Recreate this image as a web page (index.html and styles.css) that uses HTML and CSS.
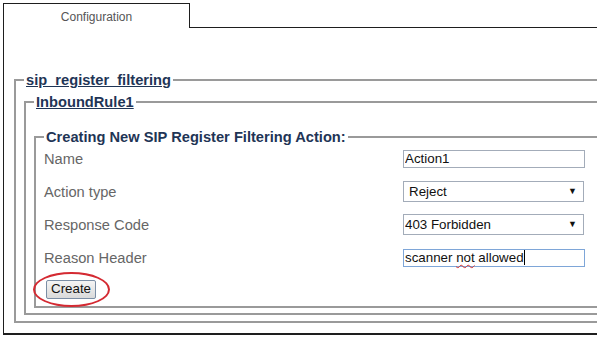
FILE: index.html
```html
<!DOCTYPE html>
<html lang="en">
<head>
    <meta charset="UTF-8">
    <meta name="viewport" content="width=device-width, initial-scale=1.0">
    <title>Configuration</title>
    <link rel="stylesheet" href="styles.css">
</head>
<body>
    <div class="page">
        <div class="tabs">
            <div class="tab">Configuration</div>
            <div class="tab-fill"></div>
        </div>
        <div class="panel">
            <fieldset class="group outer">
                <legend><a href="#">sip_register_filtering</a></legend>
                <fieldset class="group rule">
                    <legend><a href="#">InboundRule1</a></legend>
                    <fieldset class="group action">
                        <legend>Creating New SIP Register Filtering Action:</legend>
                        <div class="form">
                            <label class="label">Name</label>
                            <div class="field"><input class="input" type="text" value="Action1"></div>

                            <label class="label">Action type</label>
                            <div class="field">
                                <span class="select-wrap">
                                    <select class="select padded">
                                        <option>Reject</option>
                                    </select>
                                </span>
                            </div>

                            <label class="label">Response Code</label>
                            <div class="field">
                                <span class="select-wrap">
                                    <select class="select">
                                        <option>403 Forbidden</option>
                                    </select>
                                </span>
                            </div>

                            <label class="label">Reason Header</label>
                            <div class="field">
                                <div class="input focused">scanner <span class="typo">not</span> allowed<span class="caret"></span></div>
                            </div>
                        </div>
                        <div class="actions">
                            <span class="marked">
                                <button class="button">Create</button>
                            </span>
                        </div>
                    </fieldset>
                </fieldset>
            </fieldset>
        </div>
    </div>
</body>
</html>
```

FILE: styles.css
```css
body {
    margin: 0;
    font-family: "Liberation Sans", Arial, sans-serif;
    background: #fff;
    overflow: hidden;
}
.page {
    margin: 3px 0 0 3px;
    width: 700px;
}
.tabs {
    display: flex;
    height: 25px;
}
.tab {
    width: 187px;
    border: 1px solid #1e1e1e;
    border-bottom: none;
    font-size: 12px;
    color: #555;
    text-align: center;
    padding-top: 6px;
    box-sizing: border-box;
}
.tab-fill {
    flex: 1;
    border-bottom: 1px solid #1e1e1e;
}
.panel {
    border-left: 1px solid #1e1e1e;
    border-bottom: 2px solid #1e1e1e;
    padding: 44px 0 10px 10px;
}
.group {
    margin: 0;
    border: 2px solid #9a9a9a;
    border-right: none;
    padding: 6px 0 6px 8px;
    min-width: 0;
}
.group legend {
    padding: 0 2px;
    font-size: 14.67px;
    line-height: 16px;
    font-weight: bold;
    color: #1f3556;
}
.group legend a {
    color: #1f3556;
}
.rule {
    padding-bottom: 5px;
}
.action {
    margin-top: 13px;
    padding: 0 0 7px 8px;
}
.form {
    display: grid;
    grid-template-columns: 359px 182px;
    grid-auto-rows: 33px;
    align-items: center;
    margin-top: -3px;
}
.label {
    font-size: 14.67px;
    color: #666;
}
.field {
    display: flex;
    align-items: center;
}
.input {
    width: 182px;
    height: 18px;
    box-sizing: border-box;
    border: 1px solid #a3acb9;
    padding: 0 1px;
    font-family: "Liberation Sans", Arial, sans-serif;
    font-size: 13.33px;
    color: #111;
    line-height: 16px;
    white-space: nowrap;
}
.focused {
    border-color: #7ea6d8;
}
.typo {
    text-decoration: underline wavy #d03030;
    text-decoration-thickness: 1px;
    text-underline-offset: 2px;
}
.caret {
    display: inline-block;
    width: 1px;
    height: 15px;
    background: #000;
    vertical-align: -3px;
}
.select-wrap {
    position: relative;
    display: inline-block;
}
.select-wrap::after {
    content: "\25BC";
    position: absolute;
    right: 7px;
    top: 5px;
    font-size: 9px;
    color: #111;
    pointer-events: none;
}
.select {
    appearance: none;
    -webkit-appearance: none;
    width: 181px;
    height: 21px;
    border: 1px solid #a3acb9;
    border-radius: 0;
    background: #fff;
    padding: 0 0 0 1px;
    font-family: "Liberation Sans", Arial, sans-serif;
    font-size: 13.33px;
    color: #111;
}
.select.padded {
    padding-left: 5px;
}
.actions {
    margin-top: 5px;
}
.marked {
    position: relative;
    display: inline-block;
    margin-left: 2px;
}
.marked::after {
    content: "";
    position: absolute;
    left: -13px;
    top: -8px;
    width: 73px;
    height: 31px;
    border: 2px solid #d42a32;
    border-radius: 50%;
}
.button {
    display: block;
    height: 19px;
    padding: 0 4px;
    border: 1px solid #7b8ea5;
    border-radius: 2px;
    background: linear-gradient(#f4f4f4, #dadada);
    font-family: "Liberation Sans", Arial, sans-serif;
    font-size: 13.33px;
    color: #111;
    line-height: 16px;
}
```
